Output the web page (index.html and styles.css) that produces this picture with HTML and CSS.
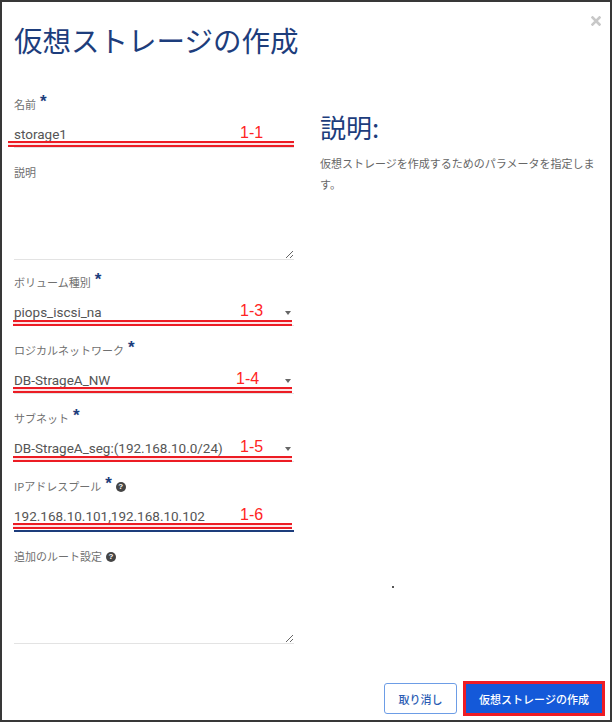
FILE: index.html
```html
<!DOCTYPE html>
<html>
<head>
	<meta charset="UTF-8">
	<title>仮想ストレージの作成</title>
	<link rel="stylesheet" href="styles.css">
</head>
<body>
	<div class="modal">
		<span class="close">
			<svg width="10" height="10" viewBox="0 0 10 10"><path d="M1.5 1.5L8.5 8.5M8.5 1.5L1.5 8.5" stroke="#c8c8c8" stroke-width="2.6" stroke-linecap="square"/></svg>
		</span>
		<h1 class="modal-title">仮想ストレージの作成</h1>

		<div class="modal-body">
			<div class="form-col">
				<div class="field">
					<div class="field-label">名前<span class="req">*</span></div>
					<div class="control">
						<input type="text" value="storage1">
						<span class="anno-num">1-1</span>
						<span class="anno-line first"></span>
					</div>
				</div>
				<div class="field area">
					<div class="field-label">説明</div>
					<textarea></textarea>
				</div>
				<div class="field">
					<div class="field-label">ボリューム種別<span class="req">*</span></div>
					<div class="control select">
						<select><option>piops_iscsi_na</option></select>
						<span class="anno-num">1-3</span>
						<span class="anno-line low"></span>
					</div>
				</div>
				<div class="field">
					<div class="field-label">ロジカルネットワーク<span class="req">*</span></div>
					<div class="control select">
						<select><option>DB-StrageA_NW</option></select>
						<span class="anno-num shift">1-4</span>
						<span class="anno-line"></span>
					</div>
				</div>
				<div class="field">
					<div class="field-label">サブネット<span class="req">*</span></div>
					<div class="control select">
						<select><option>DB-StrageA_seg:(192.168.10.0/24)</option></select>
						<span class="anno-num">1-5</span>
						<span class="anno-line low"></span>
					</div>
				</div>
				<div class="field">
					<div class="field-label">IPアドレスプール<span class="req">*</span><span class="help-ic">?</span></div>
					<div class="control focused">
						<input type="text" value="192.168.10.101,192.168.10.102">
						<span class="anno-num">1-6</span>
						<span class="anno-line"></span>
					</div>
				</div>
				<div class="field area">
					<div class="field-label">追加のルート設定<span class="help-ic">?</span></div>
					<textarea></textarea>
				</div>
			</div>

			<div class="help-col">
				<h2>説明:</h2>
				<p>仮想ストレージを作成するためのパラメータを指定します。</p>
			</div>
		</div>

		<div class="modal-footer">
			<button class="btn btn-cancel">取り消し</button>
			<button class="btn btn-primary">仮想ストレージの作成</button>
		</div>
		<span class="stray"></span>
	</div>
</body>
</html>
```

FILE: styles.css
```css
html, body {margin: 0;padding: 0;background: #fff;}
body {font-family: "Noto Sans CJK JP", "Noto Sans", sans-serif;}

.modal {width: 612px;height: 722px;border: 2px solid #383838;box-sizing: border-box;position: relative;display: flex;flex-direction: column;padding: 0 12px;}
.close {position: absolute;top: 14px;right: 9px;width: 10px;height: 10px;}
.close svg {display: block;}
.modal-title {margin: 18px 0 0;font-size: 28.5px;font-weight: 400;line-height: 40px;color: #1d3d7c;white-space: nowrap;}

.modal-body {display: flex;gap: 26px;margin-top: 36px;}
.form-col {width: 282px;}
.help-col {width: 280px;padding-top: 15px;}
.help-col h2 {margin: 0;font-size: 26px;font-weight: 400;line-height: 32px;color: #1d3d7c;}
.help-col p {margin: 10px 0 0;font-size: 11px;line-height: 21px;color: #666;}

.field {margin-bottom: 16px;}
.field.area {margin-bottom: 14px;}
.field-label {font-size: 11px;line-height: 16px;color: #707070;white-space: nowrap;}
.req {font-family: "Liberation Sans", sans-serif;font-weight: bold;font-size: 17px;line-height: 16px;color: #1d3d7c;vertical-align: top;position: relative;top: -2px;margin-left: 4px;}
.help-ic {display: inline-block;width: 10px;height: 10px;border-radius: 50%;background: #454545;color: #fff;font-family: "Liberation Sans", sans-serif;font-weight: bold;font-size: 8px;line-height: 10px;text-align: center;vertical-align: middle;margin-left: 4px;position: relative;top: -1px;}

.control {position: relative;height: 36px;box-sizing: border-box;border-bottom: 1px solid #e3e3e3;}
.control.focused {height: 38px;border-bottom: 2px solid #1d3d7c;}
.control input, .control select {display: block;width: 100%;height: 35px;box-sizing: border-box;margin: 0;padding: 12px 0 3px;border: none;outline: none;background: transparent;font-family: Roboto, "Liberation Sans", sans-serif;font-size: 13.5px;line-height: 20px;color: #555;-webkit-appearance: none;appearance: none;border-radius: 0;}
.control.select::after {content: '';position: absolute;right: 3px;top: 21px;border-left: 3.5px solid transparent;border-right: 3.5px solid transparent;border-top: 4px solid #666;}

.field textarea {display: block;width: 100%;height: 80px;box-sizing: border-box;margin: 0;padding: 0;border: none;border-bottom: 1px solid #e3e3e3;outline: none;background: transparent;resize: vertical;font-family: Roboto, sans-serif;font-size: 13px;color: #555;}

.anno-num {position: absolute;left: 226px;top: 12px;font-family: "Liberation Sans", Arial, sans-serif;font-size: 16px;line-height: 17px;color: #ff2424;}
.anno-num.shift {left: 222px;}
.anno-line {position: absolute;left: -1px;right: 2px;top: 29px;height: 6px;box-sizing: border-box;border-top: 2px solid #ec1c24;border-bottom: 2px solid #ec1c24;background: #fde4e5;}
.anno-line.first {left: -6px;right: 0;}
.anno-line.low {top: 30px;}

.modal-footer {margin-top: auto;margin-right: -7px;padding-bottom: 4px;display: flex;justify-content: flex-end;align-items: center;gap: 6px;}
.btn {margin: 0;font-family: "Noto Sans CJK JP", sans-serif;font-size: 11px;font-weight: 500;cursor: pointer;box-sizing: border-box;}
.btn-cancel {width: 73px;height: 31px;border: 1px solid #6d9de6;border-radius: 3px;background: #fff;color: #2b5cb3;}
.btn-primary {width: 142px;height: 35px;border: 3px solid #ee1c25;border-radius: 0;background: #1459d9;color: #fff;}

.stray {position: absolute;left: 390px;top: 584px;width: 2px;height: 2px;background: #555;}
```
